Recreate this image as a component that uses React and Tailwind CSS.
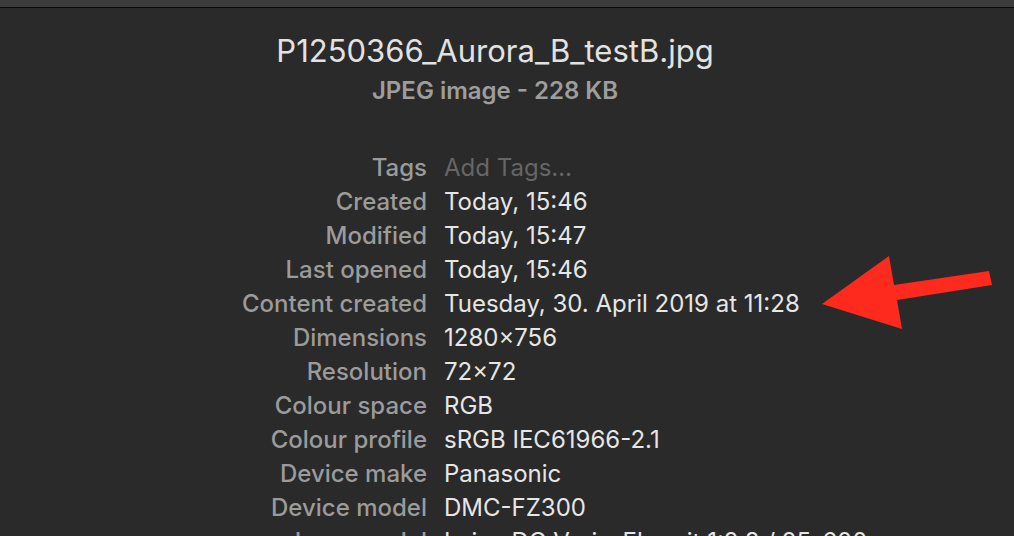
import React from "react";

const rows = [
  ["Tags", "Add Tags…", true],
  ["Created", "Today, 15:46"],
  ["Modified", "Today, 15:47"],
  ["Last opened", "Today, 15:46"],
  ["Content created", "Tuesday, 30. April 2019 at 11:28"],
  ["Dimensions", "1280×756"],
  ["Resolution", "72×72"],
  ["Colour space", "RGB"],
  ["Colour profile", "sRGB IEC61966-2.1"],
  ["Device make", "Panasonic"],
  ["Device model", "DMC-FZ300"],
  ["Lens model", "Leica DC Vario-Elmarit 1:2.8 / 25-600"],
];

export default function App() {
  return (
    <div
      className="relative w-[1014px] h-[536px] overflow-hidden bg-[#2a2a2a]"
      style={{ fontFamily: "Inter, 'Noto Sans', sans-serif" }}
    >
      <div className="h-[7px] bg-[#3c3c3c]" />
      <div className="h-[1px] bg-[#0b0b0b]" />
      <div className="flex flex-col items-center pt-[25px] pr-[24px]">
        <div className="text-[31px] leading-[36px] text-[#e2e2e2] whitespace-nowrap">
          P1250366_Aurora_B_testB.jpg
        </div>
        <div className="mt-[8px] text-[24px] leading-[28px] font-semibold text-[#9d9d9d] whitespace-nowrap">
          JPEG image - 228 KB
        </div>
      </div>
      <div className="mt-[46px] flex flex-col">
        {rows.map(([label, value, dim]) => (
          <div key={label} className="flex h-[34px] items-center text-[24px] leading-[34px] whitespace-nowrap">
            <div className="w-[427px] text-right text-[#9b9b9b] font-medium">{label}</div>
            <div className={"ml-[17px] " + (dim ? "text-[#666666]" : "text-[#e6e6e6]")}>{value}</div>
          </div>
        ))}
      </div>
      <svg className="absolute left-0 top-0" width="1014" height="536" viewBox="0 0 1014 536">
        <polygon
          points="822,304 889,256 894,285 989,271 992,285 897,300 902,329"
          fill="#fe2a1e"
        />
      </svg>
    </div>
  );
}
